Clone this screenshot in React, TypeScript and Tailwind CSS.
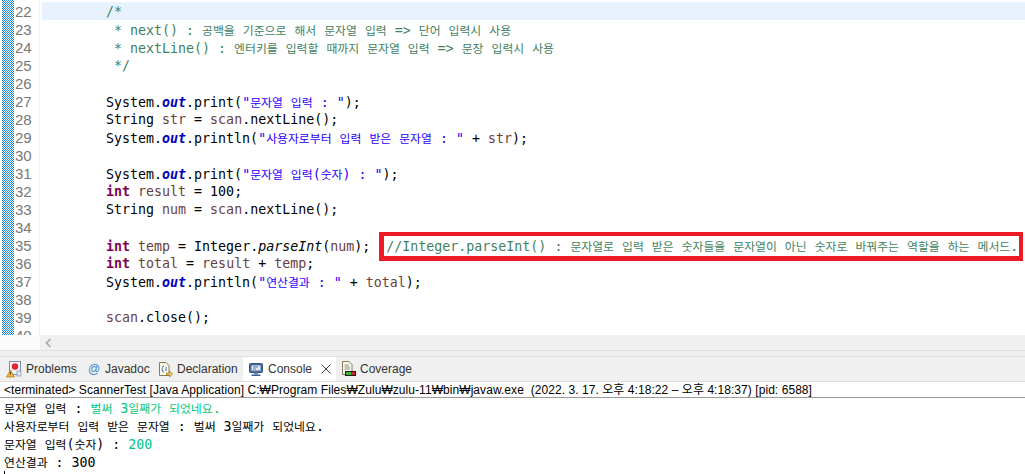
import React from "react";

const mono = "font-['DejaVu_Sans_Mono','Liberation_Mono',monospace]";

function Runs({ text, className = "" }: { text: string; className?: string }) {
  const parts = text.split(/([\uac00-\ud7a3]+)/);
  return (
    <span className={className}>
      {parts.map((p, i) =>
        /[\uac00-\ud7a3]/.test(p) ? (
          <span key={i} className="font-['Noto_Sans_CJK_KR',sans-serif] text-[11.85px]">{p}</span>
        ) : (
          <span key={i}>{p}</span>
        )
      )}
    </span>
  );
}

const K = ({ t }: { t: string }) => <span className="font-bold text-[#7f0055]">{t}</span>;
const O = () => <span className="font-bold italic text-[#0000c0]">out</span>;
const V = ({ t }: { t: string }) => <span className="text-[#6a3e3e]">{t}</span>;
const S = ({ t }: { t: string }) => <Runs text={t} className="text-[#2a00ff]" />;
const C = ({ t }: { t: string }) => <Runs text={t} className="text-[#3f7f5f]" />;

const lines: [number, React.ReactNode][] = [
  [22, <C t="/*" />],
  [23, <C t=" * next() : 공백을 기준으로 해서 문자열 입력 => 단어 입력시 사용" />],
  [24, <C t=" * nextLine() : 엔터키를 입력할 때까지 문자열 입력 => 문장 입력시 사용" />],
  [25, <C t=" */" />],
  [26, null],
  [27, <>System.<O />.print(<S t={'"문자열 입력 : "'} />);</>],
  [28, <>String <V t="str" /> = <V t="scan" />.nextLine();</>],
  [29, <>System.<O />.println(<S t={'"사용자로부터 입력 받은 문자열 : "'} /> + <V t="str" />);</>],
  [30, null],
  [31, <>System.<O />.print(<S t={'"문자열 입력(숫자) : "'} />);</>],
  [32, <><K t="int" /> <V t="result" /> = 100;</>],
  [33, <>String <V t="num" /> = <V t="scan" />.nextLine();</>],
  [34, null],
  [35, <><K t="int" /> <V t="temp" /> = Integer.<span className="italic">parseInt</span>(<V t="num" />);  <C t="//Integer.parseInt() : 문자열로 입력 받은 숫자들을 문자열이 아닌 숫자로 바꿔주는 역할을 하는 메서드." /></>],
  [36, <><K t="int" /> <V t="total" /> = <V t="result" /> + <V t="temp" />;</>],
  [37, <>System.<O />.println(<S t={'"연산결과 : "'} /> + <V t="total" />);</>],
  [38, null],
  [39, <><V t="scan" />.close();</>],
];

function ProblemsIcon() {
  return (
    <svg width="16" height="17" viewBox="0 0 16 17" className="shrink-0">
      <rect x="3.5" y="0.5" width="11" height="13" fill="#f4f4f8" stroke="#7f8cae" />
      <circle cx="9" cy="5.5" r="3.2" fill="#e0262c" />
      <path d="M4.5 9 L8.5 16 H0.5 Z" fill="#f2b632" stroke="#a9761a" strokeWidth="0.7" />
      <rect x="4.1" y="11" width="0.9" height="2.5" fill="#4a3208" />
      <rect x="11" y="10" width="4" height="5" fill="#dfe6f5" stroke="#7f8cae" strokeWidth="0.7" />
    </svg>
  );
}

function DeclarationIcon() {
  return (
    <svg width="15" height="17" viewBox="0 0 15 17" className="shrink-0">
      <path d="M1.5 1.5 H8 L11 4.5 V14.5 H1.5 Z" fill="#fbf8ec" stroke="#8a7a55" />
      <path d="M6 5 Q4.5 5 4.5 6.5 V7.5 L3.7 8.2 L4.5 9 V10 Q4.5 11 6 11" fill="none" stroke="#3f6fa8" />
      <path d="M7 7 H9 M7 9 H9" stroke="#3f6fa8" />
      <path d="M8.5 12 H11.5 V10 L14.7 13 L11.5 16 V14 H8.5 Z" fill="#f1c75a" stroke="#a07c25" strokeWidth="0.7" />
    </svg>
  );
}

function ConsoleIcon() {
  return (
    <svg width="15" height="15" viewBox="0 0 15 15" className="shrink-0">
      <rect x="0.5" y="1.5" width="13" height="9" rx="1" fill="#4d6d9e" stroke="#2f4e80" />
      <rect x="2.5" y="3.5" width="9" height="5" fill="#dfe8f5" />
      <path d="M4 5 H9 M4 7 H7" stroke="#5678a8" />
      <rect x="5" y="10.5" width="4" height="2" fill="#6d86ab" />
      <rect x="2.5" y="12.5" width="9" height="1.5" fill="#3f5f90" />
    </svg>
  );
}

function CoverageIcon() {
  return (
    <svg width="15" height="16" viewBox="0 0 15 16" className="shrink-0">
      <path d="M1.5 0.5 H8 L11 3.5 V13.5 H1.5 Z" fill="#fbf8ec" stroke="#8a7a55" />
      <path d="M3.5 4 H8 M3.5 6 H9 M3.5 8 H9" stroke="#8f8f8f" />
      <rect x="4" y="10" width="11" height="5" fill="#1a1a1a" />
      <rect x="5" y="11" width="5.5" height="3" fill="#35b835" />
      <rect x="10.5" y="11" width="3.5" height="3" fill="#d62020" />
    </svg>
  );
}

function Tab({ icon, label, className = "" }: { icon: React.ReactNode; label: string; className?: string }) {
  return (
    <div className={`flex items-center gap-[4px] ${className}`}>
      {icon}
      <span>{label}</span>
    </div>
  );
}

export default function App() {
  return (
    <div className="w-[1025px] h-[474px] overflow-hidden bg-white flex flex-col relative">
      <div className="h-[335px] flex overflow-hidden shrink-0">
        <div className="w-[40px] shrink-0 border-r border-[#f0f0f0] flex pl-[2px]">
          <svg width="12" height="335" className="shrink-0">
            <defs>
              <pattern id="ruler" width="2" height="2" patternUnits="userSpaceOnUse">
                <rect width="2" height="2" fill="#ffffff" />
                <rect width="1" height="1" fill="#1e84dc" />
                <rect x="1" y="1" width="1" height="1" fill="#1e84dc" />
              </pattern>
            </defs>
            <rect width="12" height="335" fill="url(#ruler)" />
          </svg>
        </div>
        <div className={`flex-1 min-w-0 pt-[2px] pl-[2px] ${mono} text-[13.3px] leading-[18px] text-black whitespace-pre`}>
          {lines.map(([n, c]) => (
            <div key={n} className={`h-[18px] flex ${n === 22 ? "bg-[#e8f2fe]" : ""}`}>
              <span className="w-[64px] shrink-0" />
              <span className="whitespace-pre pt-[1px]">{c}</span>
            </div>
          ))}
        </div>
      </div>

      {/* line numbers sit over the ruler column */}
      <div className="absolute left-[15px] top-[3px] h-[332px] overflow-hidden font-['Liberation_Sans',sans-serif] text-[15px] leading-[18px] text-[#787878]">
        {lines.map(([n]) => (
          <div key={n} className="h-[18px]">{n}</div>
        ))}
        <div className="h-[18px]">40</div>
      </div>

      <div className="h-[15px] shrink-0 flex">
        <div className="w-[40px] shrink-0 bg-[#fbfbfb]" />
        <div className="flex-1 bg-[#f0f0f0] flex items-center pl-[5px]">
          <svg width="7" height="10" viewBox="0 0 7 10">
            <path d="M5.5 1 L1.5 5 L5.5 9" fill="none" stroke="#a8a8a8" strokeWidth="1.6" />
          </svg>
        </div>
      </div>

      <div className="h-[7px] shrink-0 bg-[#f0f0f0] border-t border-b border-[#e0e0e0]" />

      <div className="h-[25px] shrink-0 bg-[#f0f0f0] flex items-stretch font-['Liberation_Sans',sans-serif] text-[12px] text-[#333333] pl-[6px] border-b border-[#dcdcdc]">
        <Tab icon={<ProblemsIcon />} label="Problems" className="w-[82px]" />
        <Tab icon={<span className="text-[#3b7fc4] w-[12px] text-center">@</span>} label="Javadoc" className="w-[70px] gap-[5px]" />
        <Tab icon={<DeclarationIcon />} label="Declaration" className="w-[85px]" />
        <div className="w-[93px] bg-white flex items-center pl-[6px] gap-[4px]">
          <ConsoleIcon />
          <span>Console</span>
          <svg width="10" height="10" viewBox="0 0 10 10" className="ml-[5px]">
            <path d="M0.5 0.5 L9.5 9.5 M9.5 0.5 L0.5 9.5" stroke="#444444" strokeWidth="1" />
          </svg>
        </div>
        <Tab icon={<CoverageIcon />} label="Coverage" className="pl-[5px]" />
      </div>

      <div className="h-[16px] shrink-0 bg-white border-b border-[#9a9a9a] pl-[4px] font-['Liberation_Sans','Noto_Sans_CJK_KR',sans-serif] text-[12px] leading-[16px] tracking-[0.06px] text-black whitespace-pre">
        {"<terminated> ScannerTest [Java Application] C:\u20A9Program Files\u20A9Zulu\u20A9zulu-11\u20A9bin\u20A9javaw.exe  (2022. 3. 17. 오후 4:18:22 – 오후 4:18:37) [pid: 6588]"}
      </div>

      <div className={`flex-1 pl-[4px] pt-[1px] ${mono} text-[13.3px] leading-[18px] text-black whitespace-pre`}>
        <div className="h-[18px]"><Runs text="문자열 입력 : " /><Runs text="벌써 3일째가 되었네요." className="text-[#00c87d]" /></div>
        <div className="h-[18px]"><Runs text="사용자로부터 입력 받은 문자열 : 벌써 3일째가 되었네요." /></div>
        <div className="h-[18px]"><Runs text="문자열 입력(숫자) : " /><span className="text-[#00c87d]">200</span></div>
        <div className="h-[18px]"><Runs text="연산결과 : 300" /></div>
        <div className="w-px h-[4px] bg-black" />
      </div>

      {/* annotation drawn over the code */}
      <div className="absolute left-[379px] top-[232px] w-[644px] h-[29px] border-t-[4px] border-r-[4px] border-b-[5px] border-l-[5px] border-[#ed1c24]" />
    </div>
  );
}
